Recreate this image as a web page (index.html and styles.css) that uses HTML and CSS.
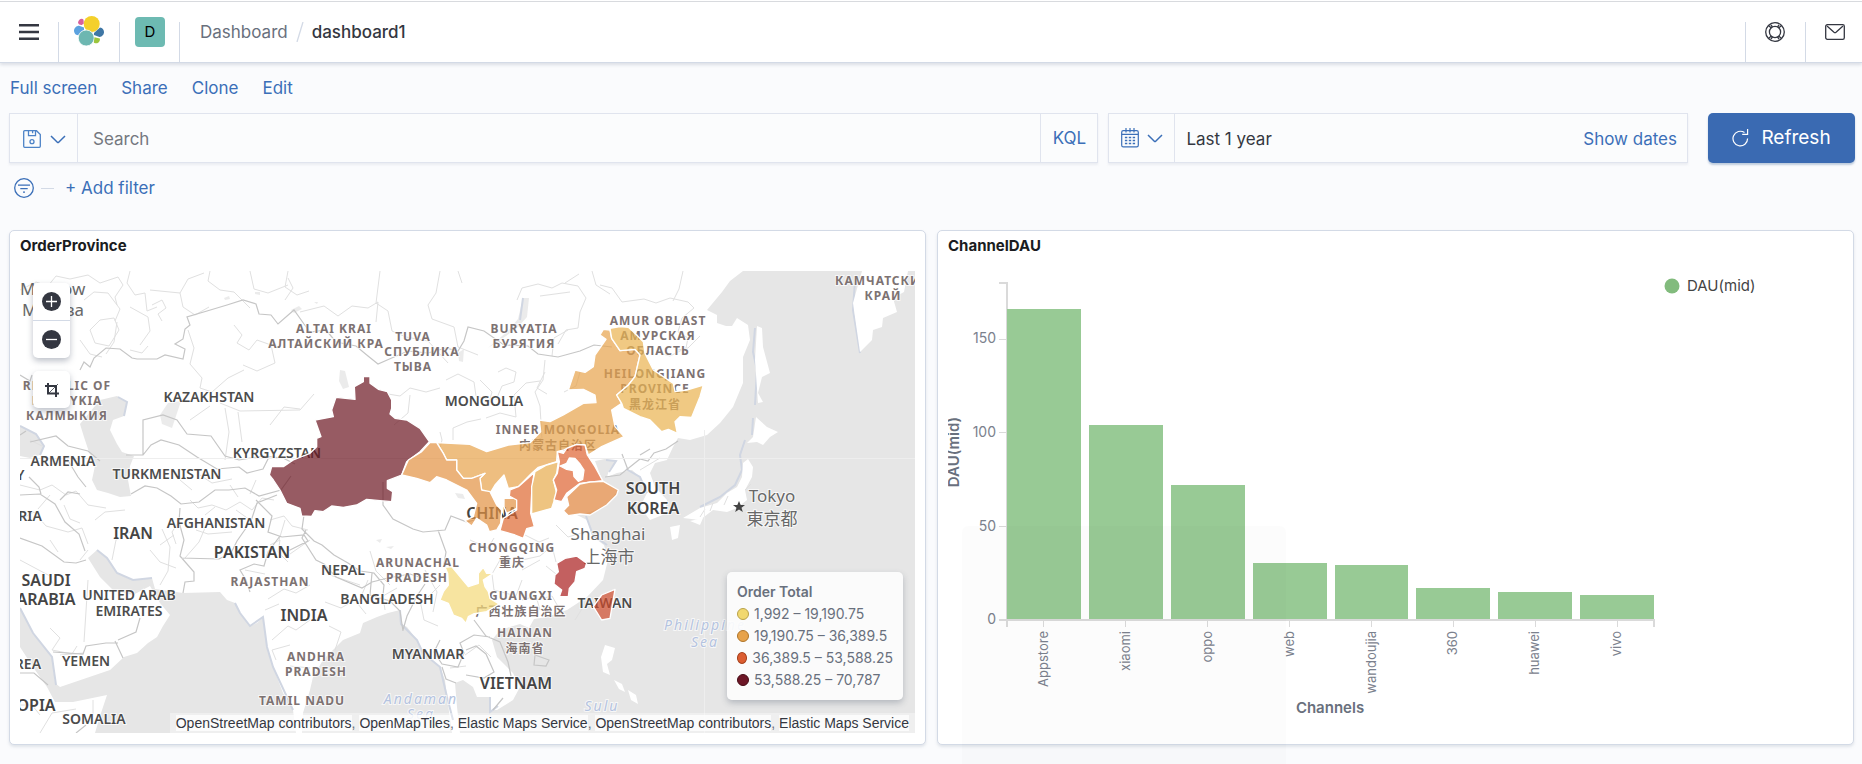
FILE: index.html
```html
<!DOCTYPE html>
<html lang="en">
<head>
<meta charset="utf-8">
<title>dashboard1</title>
<link rel="stylesheet" href="styles.css">
</head>
<body>
<header class="header">
  <button class="header-item menu" aria-label="Menu">
    <svg width="20" height="16" viewBox="0 0 20 16" fill="#343741"><path d="M0 0h20v2.4H0zM0 6.8h20v2.4H0zM0 13.6h20V16H0z"/></svg>
  </button>
  <a class="header-item logo" href="#" aria-label="Home">
    <svg width="30" height="30" viewBox="0 0 30 30">
      <circle cx="17.700" cy="8" r="8" fill="#f4d02b"/>
      <path d="M4 6.500c.5-3 4-5 5.500-2.700l.3 3.800-2 1.300C6 9 4.500 8.500 4 6.500z" fill="#d7609c"/>
      <path d="M5 9.700l5 1.800v2.800l-5.800 5C1 19 0 16.500 0 14.500c0-2.500 2.500-4.800 5-4.800z" fill="#5ca2df"/>
      <circle cx="12.200" cy="22" r="8" fill="#6db7b1" stroke="#fff" stroke-width=".8"/>
      <path d="M20 17l6-5.500c2.500.2 4 2.500 4 4.500 0 2.500-2 4.800-4.500 5L20 19z" fill="#3f77a5"/>
      <path d="M20.500 21.200l5.300 1.300c.6 2-.8 4.700-3.500 4.800-1.300 0-2.500-.3-2.500-.8z" fill="#9cc53c"/>
    </svg>
  </a>
  <button class="header-item space" aria-label="Default space"><span class="avatar">D</span></button>
  <nav class="crumbs" aria-label="Breadcrumb">
    <a href="#">Dashboard</a>
    <svg class="crumb-sep" width="8" height="20" viewBox="0 0 8 20" stroke="#d3dae6" stroke-width="1.300"><path d="M1 20L7 0"/></svg>
    <span class="current">dashboard1</span>
  </nav>
  <div class="header-right">
    <button class="header-item end" aria-label="Help">
      <svg width="20" height="20" viewBox="0 0 20 20" fill="none" stroke="#343741" stroke-width="1.300"><circle cx="10" cy="10" r="9.300"/><circle cx="10" cy="10" r="5.600"/><path d="M3.400 3.600l3 2.300M5.900 3l1.600 2M16.600 3.600l-3 2.300M14.100 3l-1.600 2M3.400 16.400l3-2.300M5.900 17l1.600-2M16.600 16.400l-3-2.300M14.100 17l-1.600-2"/></svg>
    </button>
    <button class="header-item end" aria-label="News">
      <svg width="20" height="16" viewBox="0 0 20 16" fill="none" stroke="#343741" stroke-width="1.300"><rect x=".7" y=".7" width="18.600" height="14.600" rx="1.600"/><path d="M2 2l7 6.200q1 .8 2 0L18 2"/></svg>
    </button>
  </div>
</header>

<nav class="topnav" aria-label="Dashboard actions">
  <button>Full screen</button><button>Share</button><button>Clone</button><button>Edit</button>
</nav>

<form class="query">
  <div class="box search">
    <button type="button" class="picker" aria-label="Saved queries">
      <svg width="18" height="18" viewBox="0 0 18 18" fill="none" stroke="#4d83c7" stroke-width="1.300"><path d="M1.700.7h11.800l3.800 3.800v11.800a1 1 0 0 1-1 1H1.700a1 1 0 0 1-1-1V1.700a1 1 0 0 1 1-1zM5.500.7v5h7v-5M9.600.7v2.500"/><circle cx="9" cy="11.700" r="2"/></svg>
      <svg width="16" height="9" viewBox="0 0 16 9" fill="none" stroke="#3b6fb8" stroke-width="1.500"><path d="M1 1l6.300 6.200q.7.600 1.400 0L15 1"/></svg>
    </button>
    <input type="text" placeholder="Search" aria-label="Search">
    <button type="button" class="kql">KQL</button>
  </div>
  <div class="box dates">
    <button type="button" class="picker" aria-label="Quick dates">
      <svg width="18" height="20" viewBox="0 0 18 20" fill="none" stroke="#3b6fb8" stroke-width="1.200"><rect x=".7" y="2.600" width="16.600" height="16.200" rx="1.600"/><path d="M.7 6.300h16.600M5 0v4.600M9 0v4.600M13 0v4.600"/><path stroke-dasharray="2.400 1.500" stroke-width="1.700" d="M3.900 9.500h10.400M3.900 12.500h10.400M3.900 15.500h10.400"/></svg>
      <svg width="16" height="9" viewBox="0 0 16 9" fill="none" stroke="#3b6fb8" stroke-width="1.500"><path d="M1 1l6.300 6.200q.7.600 1.400 0L15 1"/></svg>
    </button>
    <button type="button" class="range">Last 1 year</button>
    <button type="button" class="show">Show dates</button>
  </div>
  <button type="button" class="refresh">
    <svg width="17" height="18" viewBox="0 0 17 18" fill="none" stroke="#fff" stroke-width="1.200"><path d="M15.600 9.500A7.300 7.300 0 1 1 12.500 3.600M15.600 0v5.400h-5.400"/></svg>
    Refresh
  </button>
</form>

<div class="filters">
  <button aria-label="Filter options"><svg width="20" height="20" viewBox="0 0 20 20" fill="none" stroke="#3b6fb8" stroke-width="1.300"><circle cx="10" cy="10" r="9.300"/><path d="M4 7.200h12M6.300 10.700h7.400M9 14.200h2"/></svg></button>
  <span class="dash"></span>
  <button>+ Add filter</button>
</div>

<main class="grid">
  <section class="panel">
    <h2>OrderProvince</h2>
    <div class="map">
      <svg class="canvas" viewBox="20 271 895 462" role="img" aria-label="Map of orders by province">
        <rect class="land" x="20" y="271" width="895" height="462"/>
        <g class="sea">
          <path d="M743 271L730 281 722 292 707 310 717 315 717 323 726 326 732 326 737 318 748 325 750 340 743 357 743 383 733 407 720 423 707 435 690 440 678 438 673 447 667 460 655 463 650 473 655 487 667 500 665 514 650 520 640 507 647 493 640 477 632 470 617 473 607 477 609 470 616 461 605 459 595 461 602 480 618 490 607 505 590 512 577 515 587 520 593 537 604 545 608 560 603 580 587 597 567 610 547 617 534 619 529 628 520 624 500 630 492 640 497 657 513 673 520 687 513 700 497 710 490 710 490 697 477 697 473 687 463 680 455 683 457 707 460 733 452 733 447 697 445 680 440 667 430 660 423 653 417 640 407 627 400 623 400 610 388 613 377 617 363 623 360 633 343 640 323 660 313 677 310 690 303 713 302 733 296 733 293 710 283 693 273 667 267 647 263 617 257 623 250 626 240 613 235 603 227 600 220 592 183 593 155 589 152 578 133 580 117 573 107 558 97 550 88 558 100 577 113 590 133 595 150 586 160 603 170 615 163 626 157 637 148 643 137 653 124 657 110 670 60 687 55 683 52 657 40 642 33 633 23 613 20 608V647L33 667 47 687 55 702 73 702 107 695 100 716 95 733H915V271z"/>
          <path d="M100 400L117 396 127 402 124 416 113 420 110 430 117 444 122 452 134 456 130 466 128 480 131 496 120 497 108 493 97 490 92 480 95 466 89 452 84 437 80 424z"/>
          <path d="M20 426L36 434 44 446 40 455 30 458 20 456z"/>
          <path d="M523 298h6l-2 19-9 10-12 9-18 12 20-17 10-12zM160 415l8-12 13-2-3 9-6 18-10-4zM291 310l8-4 3 3-8 4zM340 370l5 1 4 16-6 2-4-8zM458 353l6-4-1 13-4-1zM224 298l5-2 1 3-5 1zM255 292l5 0 0 3-5-1zM455 493l8 1 2 5-7-1zM314 302l4 0-1 2zM376 540l6-1-2 4zM386 547l8-1-3 3z" opacity=".8"/>
        </g>
        <g class="coast">
          <path d="M20 608L33 633 52 657 56 685M97 550L107 558 117 573 133 580 152 578M235 603L240 613 250 626 263 617 267 647 273 667 293 710M400 610L401 624 417 640 423 653 440 667 447 697 453 720M490 697V712L498 706M20 426L36 434 44 446 40 455M118 397L127 402 124 416M755 328L753 352 757 370 755 405M753 418L752 435M745 440L740 455 742 470 735 485 720 497 700 507M523 298L520 320M855 280L853 310 860 353M606 460L616 461 609 472M626 469L640 477 647 493M586 516L593 535 607 545"/>
        </g>
        <g class="island">
          <path d="M862 271L853 303 860 352 872 340 873 330 882 327 883 318 897 312 893 298 904 292 908 271zM757 326L762 328 763 347 770 373 762 377 758 393 763 402 758 403 755 360zM756 417L767 427 778 432 770 437 763 445 757 442 747 443 753 437zM748 459L753 467 752 477 745 490 747 500 737 508 727 512 713 510 700 520 683 518 700 508 717 503 727 493 737 487 742 477 743 463zM670 527L680 525 678 538 672 540zM690 521L703 518 700 525zM605 645L615 648 612 660 607 664 610 675 603 672 601 657zM614 680l8 4 3 8-6-3zM628 690l8 5 2 9-7-4z"/>
        </g>
        <g class="line-light">
          <path d="M20 290l16-8 12 4 8-10 14 3 18-4 12 8 18-6 5 8-8 12 2 8M84 300l10-8 14 1 12 16-5 12M90 330l10-10 14-2 5 12-10 16-14-3zM130 271l-3 12 8 12 10-2 2 18 10-4M150 290l30 3 8-14 16-6M180 293l3 14 12 8 14-8M210 271l-2 10 12 9 14 2 16 16M250 271l4 18 14 4 20-8M288 271l-3 16 12 8 12-4M152 305l10-5 4 8-8 6 4 7M140 345l10-14-2-14-18-10M130 350l12 3 6-7M117 322l-3 20-8 12M80 340l10 14 12 3M188 330l6 18-4 16 12 14-2 10 12 4 16-14 16-8M234 325l8 10-5 8 12 7 8-10 14 5 4 18-18 8-14-6M285 300l8-12-5-10M300 312l24-6 14 10 14-10 16 2 10-6-2 20M380 271l-4 32 12 8 4 20 14 6 22 4 20 22M440 271l-4 22-8 12 4 14 22 8 4 20 20 8M462 283l-4-12M517 300l5-12 16-4 14 4 10-5 16 3 8 12-6 14-2 16-12 2-8 14M565 283l14-9M568 330l-14 8-2 18M540 296l30-4M592 271l4 14 14 9M600 285l12 3 10 14 22-3 12 4 14-5 18 4 6 6-12 10-4 14 10 6-2 10-16 8-14-4M683 271l-4 18-6 12M700 336l-12 12-10 2M545 360l-2 20-8 12 5 14 2 34M440 388l-14 4-16-4-10 8-12-2M410 395l-2 18-14 12M446 380l12-6 16 8 2 14 14 4M440 432l2 8-2 8M453 440v-12l14-6 14-3M480 380l12 12-4 14M486 418l14-5 16 4-2-22 12-12 14-2M498 372l8-4 10 4-2 10-12 4-6 14M545 372l-8 16 10 6M580 372l-4 14-12 6M20 485l20 5 12-5 14 10 10-4 12 14 18 3M20 520l14-8 12 14 22 6 14-4 6 16M50 540l8 12M64 505l6 14 10 4M30 440l12 6M80 560l8-10M20 560l30 16 4 10M95 520l10-8 20-2M112 560l4-20 14-8 20 4M150 550l10 12 16 6M160 585l8-14 2-24-8-18M88 580l-4 62M50 628l10 10-8 12 20 4 5-8M60 655l24-2M20 705h12l8 10M40 733l12-20 24-4M93 700v14M190 500l8 8 14-3 14 5 14-8 12 8 10-12 12 2M205 515l10-8M180 520l-8 12 4 12M196 530l12 4 24-2M185 558l14-16 6-14M236 510l14 10M270 545l10-5-2 12 10 10M245 570l20 4M310 540l-20 14M270 520l14-4 8 10 16 4M310 585l-14 8-12-4-16 10M265 610l14-6M272 640l16-14 8 4 14-10M276 660l-4-10 18-5M360 585l-30-10M368 580l-10 24 8 10M390 585l-14-14-6-20M325 602l16 6 14-8M385 610l-2-14 14-8M425 570l12 22-4 20M440 585l-12 12M470 540l18 8 6-10M500 560l-8 14 2 16 22 6 6-16M522 560l18-4 12-10 4 16M540 560l-18 10M525 535l14 7 10-4M556 525l12 12 14-4M556 574l-10-8M560 610l-8-14-16 4M540 610l-4-14-14 4M575 620l10-16M465 655l14-10 12 12M450 668l16-2M420 600l4 20 14 6M335 650l6-18-12-6M310 668l-20-2M220 403l20 8 60-1 14-16M225 408l4 24-4 28M238 412l4 30M190 420l20-14M270 425l14-18 16 2M160 545l14-10M50 495l-12 14M230 485l8 12M256 480l-6 14M285 520l-6 20M200 475l12 8 20-4M180 480l12 10M640 470l20-12M745 490l6-6M724 505l4-9M710 511l3-8M700 517l5-8"/>
        </g>
        <g class="line">
          <path d="M80 370l4-8 6 5 4-9 12-10 14 1 12 9 5 1 20 0 8-4 18 4 2-10-10-5 8-5 2-10 5-4-3-8 20-6 20-6 16-5 13 4 3 10 12 1 7 9 16-14 10 14 6 8 16-2 10 12 20 4 12 10 10 8 16-7 14-6 20 2 18-5 12 3 6-10 4-14 16 4 20 14 24 1 10 8 20 3 22-6 14-6 18 2M20 375l10 6 2-6M30 442l26-6 12 10 20 5 12 10M20 435l6-4M66 457l12 20 8 10M143 455v-35l20-5 14 5 10 14 24 2 14 20 14 4 24-4 20 2 12 6M126 455h17l8-10 10-5 18 5 18 12 20 12 22-2 8 6 16-4 6-12M20 495l20-1 15 10 10 18 14 12 6 17M20 538l22 8 22 16 12 1 10-3M41 494l-2-7-10-10M60 500l8-8 12 2M131 494l14-8 12 2 14 8 10 8 18-2 16-12 14 0 16-2 14 8 22-6 10-14M180 508l-1 14 5 18-4 16 14 16 0 9-9 1-2 11M181 558l38 1 12-6 6-12 14-20 6-18 20-8M256 500l16 16-4 16 14 5 22-2 4 6-12 6-8 4M250 592l-4-12-6-10 14-6 10 2 4-14 12-16M118 643h-12l-20 3-3 8-30-2M115 641l8 17M118 640l18-8 4-14M20 673h14l14 12M76 733l10-8M304 515l-2 14 12 12 8 4 12 10 14 8 12 8 14 2 10 12-1 10M383 482v23l10 14 20 10 10 3 22-2 6-14 16 6 14-4M306 530l-4 8 14 22 8 4 12 13 26 11 10-6 16-4 22-4 12 4M372 573l-2 22 20 6 10 10 3 20M403 630l4-14 10-20 8-12M438 530l8 22-2 12M440 640l-6 12 8 12 16 3 6-14-4-10 14-8 16 2M442 667l4 12 10 4M474 620l12 16 14 6 8 20 3 14M466 650l10-4 10 8 8 18-10 6-18-3M605 477l15-2 20-16 8 2 6-8 12-4 12-8M628 470l-6-16M640 455l10-6M493 710l10-12M535 655l14 5-3 6-12-1z"/>
        </g>
        <path class="tile-edge" d="M20 458.500H915M704.500 430V733"/>

        <g class="city">
          <text x="20" y="295">Moscow</text><text x="22" y="316">Москва</text>
          <text class="mid" x="772" y="502">Tokyo</text><text class="mid" x="772" y="525">東京都</text>
          <text class="mid" x="608" y="540">Shanghai</text><text class="mid" x="609" y="563">上海市</text>
        </g>
        <path fill="#444" d="M739 501l1.700 4h4.300l-3.500 2.700 1.300 4.300-3.800-2.600-3.800 2.600 1.300-4.300-3.500-2.700h4.300z"/>
        <g class="region">
          <text x="67" y="390">REPUBLIC OF</text><text x="67" y="405">KALMYKIA</text><text x="67" y="420">КАЛМЫКИЯ</text>
          <text x="334" y="333">ALTAI KRAI</text><text x="326" y="348">АЛТАЙСКИЙ КРА</text>
          <text x="413" y="341">TUVA</text><text x="422" y="356">СПУБЛИКА</text><text x="413" y="371">ТЫВА</text>
          <text x="524" y="333">BURYATIA</text><text x="524" y="348">БУРЯТИЯ</text>
          <text x="558" y="434">INNER MONGOLIA</text><text x="558" y="450">内蒙古自治区</text>
          <text x="658" y="325">AMUR OBLAST</text><text x="658" y="340">АМУРСКАЯ</text><text x="658" y="355">ОБЛАСТЬ</text>
          <text x="655" y="378">HEILONGJIANG</text><text x="655" y="393">PROVINCE</text><text x="655" y="409">黑龙江省</text>
          <text x="883" y="285">КАМЧАТСКИЙ</text><text x="883" y="300">КРАЙ</text>
          <text x="512" y="552">CHONGQING</text><text x="512" y="567">重庆</text>
          <text x="521" y="600">GUANGXI</text><text x="521" y="616">广西壮族自治区</text>
          <text x="525" y="637">HAINAN</text><text x="525" y="653">海南省</text>
          <text x="418" y="567">ARUNACHAL</text><text x="417" y="582">PRADESH</text>
          <text x="316" y="661">ANDHRA</text><text x="316" y="676">PRADESH</text>
          <text x="302" y="705">TAMIL NADU</text><text x="270" y="586">RAJASTHAN</text>
        </g>
        <g class="country">
          <text x="209" y="402">KAZAKHSTAN</text><text x="63" y="466">ARMENIA</text><text x="167" y="479">TURKMENISTAN</text>
          <text x="277" y="458">KYRGYZSTAN</text><text x="484" y="406">MONGOLIA</text><text x="605" y="608">TAIWAN</text>
          <text x="428" y="659">MYANMAR</text><text x="387" y="604">BANGLADESH</text><text x="343" y="575">NEPAL</text>
          <text x="216" y="528">AFGHANISTAN</text><text x="22" y="521">SYRIA</text><text x="129" y="600">UNITED ARAB</text>
          <text x="129" y="616">EMIRATES</text><text x="86" y="666">YEMEN</text><text x="13" y="669">ERITREA</text><text x="94" y="724">SOMALIA</text>
          <text x="-2" y="480">TURKEY</text>
        </g>
        <g class="country large">
          <text x="653" y="494">SOUTH</text><text x="653" y="514">KOREA</text><text x="492" y="519">CHINA</text>
          <text x="516" y="689">VIETNAM</text><text x="304" y="621">INDIA</text><text x="252" y="558">PAKISTAN</text>
          <text x="133" y="539">IRAN</text><text x="46" y="586">SAUDI</text><text x="46" y="605">ARABIA</text><text x="18" y="711">ETHIOPIA</text>
        </g>
        <g class="water">
          <text x="421" y="704">Andaman</text><text x="421" y="719">Sea</text>
          <text x="602" y="711">Sulu</text><text x="705" y="630">Philippine</text><text x="705" y="647">Sea</text>
        </g>

        <g class="provinces" transform="translate(300 260) scale(.33333)">
          <path fill="#6b1521" d="M190 350L210 350 210 370 235 388 262 395 275 420 275 445 270 462 285 475 320 480 360 505 388 545 360 575 320 605 305 645 262 662 262 685 278 695 275 725 240 722 200 718 170 735 130 742 95 738 70 755 45 752 35 769 5 768 0 745 -40 730 -60 690 -80 660 -92 645 -85 620 -50 620 -20 600 30 580 50 560 50 535 63 530 45 480 100 470 95 450 108 412 165 418 163 380 190 365z"/>
          <path fill="#e7a24a" d="M410 548L510 553 560 575 625 555 690 548 722 515 718 480 750 485 790 465 850 430 888 428 885 405 850 388 805 390 825 330 855 337 880 320 885 285 918 238 900 225 910 208 930 210 935 235 960 272 1005 268 1020 285 1005 350 985 375 950 405 965 430 935 450 945 500 972 530 905 560 865 585 855 555 830 553 790 570 772 575 770 605 715 622 695 640 655 680 625 685 612 645 585 675 570 700 545 690 540 655 555 640 515 655 490 655 470 630 470 600 440 600 430 580z"/>
          <path fill="#eab24e" d="M930 205L960 200 985 202 1000 215 1030 245 1035 280 1060 330 1120 370 1125 395 1160 390 1210 375 1200 410 1175 472 1140 470 1125 485 1132 520 1105 508 1085 515 1050 480 1020 470 970 445 965 430 950 405 985 375 1005 350 1020 285 1005 268 960 272 935 235z"/>
          <path fill="#e39142" d="M390 548L410 548 430 580 440 600 470 600 470 630 490 655 515 655 555 640 540 655 545 690 570 695 590 735 605 750 602 790 590 810 568 815 560 795 530 775 515 798 495 782 520 770 530 730 500 690 440 660 410 650 390 668 350 655 305 645 325 600 365 575zM612 715L650 715 650 745 620 760 612 740z"/>
          <path fill="#de6831" d="M702 638L695 700 692 760 703 800 680 806 670 835 645 825 600 812 610 775 650 750 650 720 628 708 630 690 655 680z"/>
          <path fill="#e7ab4c" d="M775 605L770 640 760 660 770 700 755 745 695 762 695 680 705 635 740 615z"/>
          <path fill="#de6330" fill-rule="evenodd" d="M772 575L790 580 800 565 830 553 855 555 862 585 885 620 908 662 840 670 800 700 785 725 762 720 770 690 760 660 772 640 778 605zM780 618L800 610 808 594 825 595 840 612 852 630 848 658 835 664 822 650 820 632 800 628z"/>
          <path fill="#e0833a" d="M800 710L840 672 870 666 910 664 955 690 950 705 920 735 870 765 840 762 805 767 790 752 806 736z"/>
          <path fill="#f3d877" d="M435 922L455 920 505 980 535 970 535 940 550 922 560 940 580 940 550 960 555 980 565 995 570 1015 597 1032 560 1055 520 1062 505 1070 498 1090 485 1075 460 1065 445 1030 420 1020 430 995 445 975 443 940z"/>
          <path fill="#aa1c1c" d="M795 895L830 888 860 910 855 925 830 935 825 965 808 985 805 1010 778 1010 785 990 762 972 765 945 775 935 770 910z"/>
          <path fill="#cf4a2b" d="M880 1040L905 1005 945 988 930 1075 905 1080z"/>
        </g>
      </svg>

      <div class="map-tools">
        <div class="tool-group">
          <button aria-label="Zoom in"><svg width="19" height="19" viewBox="0 0 19 19"><circle cx="9.500" cy="9.500" r="9.500" fill="#343741"/><path d="M4 9.500h11M9.500 4v11" stroke="#fff" stroke-width="1.300"/></svg></button>
          <button aria-label="Zoom out"><svg width="19" height="19" viewBox="0 0 19 19"><circle cx="9.500" cy="9.500" r="9.500" fill="#343741"/><path d="M4 9.500h11" stroke="#fff" stroke-width="1.300"/></svg></button>
        </div>
        <div class="tool-group">
          <button aria-label="Fit to data"><svg width="14" height="14" viewBox="0 0 14 14" fill="none" stroke="#343741" stroke-width="2"><path d="M3 0v10.500h11M0 3h11v11"/><path stroke-width=".8" d="M4 10l9-9"/></svg></button>
        </div>
      </div>

      <div class="legend">
        <h3>Order Total</h3>
        <ul>
          <li><i class="dot d1"></i>1,992 – 19,190.75</li>
          <li><i class="dot d2"></i>19,190.75 – 36,389.5</li>
          <li><i class="dot d3"></i>36,389.5 – 53,588.25</li>
          <li><i class="dot d4"></i>53,588.25 – 70,787</li>
        </ul>
      </div>

      <div class="credits"><a href="#">OpenStreetMap contributors</a>, <a href="#">OpenMapTiles</a>, <a href="#">Elastic Maps Service</a>, <a href="#">OpenStreetMap contributors</a>, <a href="#">Elastic Maps Service</a></div>
    </div>
  </section>

  <section class="panel">
    <h2>ChannelDAU</h2>
    <svg class="canvas" viewBox="948 271 895 462" role="img" aria-label="DAU by channel">
      <g class="bars">
        <path d="M1007 309h74v310h-74zM1089 425h74v194h-74zM1171 485h74v134h-74zM1253 563h74v56h-74zM1335 565h73v54h-73zM1416 588h74v31h-74zM1498 592h74v27h-74zM1580 595h74v24h-74z"/>
      </g>
      <g class="axis">
        <path stroke-width="2" d="M999 283h8v26M999 620h656"/>
        <path stroke-width="2" d="M1007 620v7M1654 620v7"/>
        <path d="M1006.500 309V619M999 339.500h7M999 432.500h7M999 526.500h7M1043.500 620v7M1125.500 620v7M1207.500 620v7M1289.500 620v7M1371.500 620v7M1453.500 620v7M1535.500 620v7M1617.500 620v7"/>
      </g>
      <g class="ticks">
        <text x="996" y="343">150</text><text x="996" y="437">100</text><text x="996" y="531">50</text><text x="996" y="624">0</text>
      </g>
      <g class="ticks names">
        <text transform="translate(1048 631) rotate(-90)">Appstore</text>
        <text transform="translate(1130 631) rotate(-90)">xiaomi</text>
        <text transform="translate(1212 631) rotate(-90)">oppo</text>
        <text transform="translate(1294 631) rotate(-90)">web</text>
        <text transform="translate(1376 631) rotate(-90)">wandoujia</text>
        <text transform="translate(1457 631) rotate(-90)">360</text>
        <text transform="translate(1539 631) rotate(-90)">huawei</text>
        <text transform="translate(1621 631) rotate(-90)">vivo</text>
      </g>
      <g class="axis-title">
        <text x="1330" y="713">Channels</text>
        <text transform="translate(959 452) rotate(-90)">DAU(mid)</text>
      </g>
      <circle cx="1672" cy="286" r="7.500" fill="#82bb7d"/>
      <text class="series" x="1687" y="291">DAU(mid)</text>
    </svg>
  </section>
</main>
<div class="ghost" aria-hidden="true"></div>
</body>
</html>
```
FILE: styles.css
```css
* { box-sizing: border-box; }
html, body { height: 100%; }
body {
  margin: 0;
  overflow: hidden;
  position: relative;
  background: #fafbfd;
  color: #343741;
  font: 17px/24px Inter, "Noto Sans CJK SC", sans-serif;
}
button, input { font: inherit; color: inherit; background: none; border: 0; padding: 0; margin: 0; }
button { cursor: pointer; white-space: nowrap; }
a { color: inherit; text-decoration: none; }
svg { display: block; flex: none; }
h2, h3, ul { margin: 0; padding: 0; list-style: none; }

.header {
  display: flex;
  align-items: stretch;
  height: 63px;
  background: #fff;
  border-top: 1px solid #fff;
  border-bottom: 1px solid #d3dae6;
  box-shadow: inset 0 1px #d8dade, 0 2px 3px rgba(152, 162, 179, .3);
}
.header-item {
  display: flex;
  justify-content: center;
  padding-top: 15px;
  background: linear-gradient(#d3dae6, #d3dae6) right 21px / 1px 100% no-repeat;
}
.menu { width: 59px; padding: 23px 1px 0 0; }
.logo { width: 61px; padding-right: 2px; }
.space { width: 60px; }
.avatar {
  width: 30px;
  height: 30px;
  margin-top: 1px;
  border-radius: 4px;
  background: #6dbab2;
  color: #000;
  font-size: 15px;
  line-height: 29px;
}
.crumbs { display: flex; align-items: flex-start; gap: 8px; padding: 19px 0 0 20px; color: #69707d; }
.crumb-sep { margin-top: 2px; }
.current { color: #343741; font-weight: 500; }
.header-right { display: flex; margin-left: auto; }
.end { width: 60px; padding-top: 21px; background-position: left 21px; }
.end:last-child { width: 57px; padding: 23px 0 0 3px; }

.topnav { display: flex; gap: 24px; padding: 13px 10px; color: #3b6fb8; }

.query { display: flex; padding: 0 7px 0 9px; }
.box {
  display: flex;
  align-items: stretch;
  height: 50px;
  border: 1px solid #e0e4ee;
  background: #fbfcfd;
  box-shadow: 0 2px 2px rgba(152, 162, 179, .15);
}
.search { flex: 1090; margin-right: 10px; }
.dates { flex: 579; margin-right: 20px; }
.picker { display: flex; align-items: center; gap: 9px; padding: 2px 12px 0 13px; border-right: 1px solid #e0e4ee; }
.search .picker { padding-right: 11px; }
.search input { flex: 1; min-width: 0; padding: 1px 15px 0; outline: 0; }
.search input::placeholder { color: #74787f; opacity: 1; }
.kql { width: 57px; border-left: 1px solid #e0e4ee; color: #3b6fb8; }
.dates .picker { gap: 8px; padding: 0 11px 0 12px; }
.range { padding: 1px 0 0 11px; }
.show { margin-left: auto; padding: 1px 10px 0 0; color: #3b6fb8; }
.refresh {
  display: flex;
  align-items: center;
  justify-content: center;
  gap: 12px;
  width: 147px;
  height: 50px;
  border-radius: 5px;
  background: #3a6ab2;
  color: #fff;
  font-size: 19px;
  box-shadow: 0 2px 2px rgba(54, 97, 150, .3);
}

.filters { display: flex; align-items: center; padding: 13px 14px 0; color: #3b6fb8; }
.dash { width: 13px; height: 1px; margin: 0 11px 0 7px; background: #d3dae6; }

.grid { display: flex; gap: 11px; padding: 30px 8px 0 9px; }
.panel {
  flex: 1;
  min-width: 0;
  padding: 6px 10px 11px;
  border: 1px solid #d3dae6;
  border-radius: 5px;
  background: #fff;
  box-shadow: 0 2px 3px rgba(152, 162, 179, .25);
}
.panel h2 { height: 34px; color: #1a1c21; font-size: 15px; line-height: 18px; font-weight: 700; }
.canvas { width: 100%; height: auto; }

.map { position: relative; overflow: hidden; }
.land, .island { fill: #fff; }
.sea { fill: #e6e6e6; }
.coast { fill: none; stroke: #d0d6e2; stroke-width: 2; }
.line { fill: none; stroke: #c6c6c6; stroke-width: 1.2; }
.line-light { fill: none; stroke: #e0e0e0; stroke-width: 1; }
.tile-edge { fill: none; stroke: #eee; }
.canvas text { font-family: "Noto Sans", "Noto Sans CJK SC", sans-serif; }
.region, .country, .city, .water { paint-order: stroke; stroke: rgba(255, 255, 255, .7); stroke-width: 2px; }
.city { font-size: 17px; fill: #686868; }
.mid, .region, .country, .water { text-anchor: middle; }
.region { font-size: 12px; font-weight: 700; letter-spacing: 1px; fill: #7d7272; }
.country { font-size: 14px; font-weight: 600; fill: #4c4c4c; }
.large { font-size: 16px; fill: #444; }
.water { font-size: 14px; font-style: italic; letter-spacing: 2px; fill: #b4c3e0; }
.provinces path { fill-opacity: .7; stroke: #fff; stroke-width: 4; stroke-linejoin: round; }

.map-tools { position: absolute; left: 13px; top: 12px; display: grid; gap: 13px; }
.tool-group { width: 37px; border-radius: 5px; background: #fff; box-shadow: 0 3px 6px rgba(65, 78, 101, .35); }
.tool-group button { display: grid; place-items: center; width: 37px; height: 37px; }
.tool-group button + button { height: 38px; border-top: 1px solid #d3dae6; }

.legend {
  position: absolute;
  right: 12px;
  bottom: 33px;
  width: 176px;
  padding: 9px 10px;
  border-radius: 5px;
  background: rgba(253, 253, 253, .9);
  box-shadow: 0 3px 6px rgba(65, 78, 101, .3);
  color: #69707d;
  font-size: 14px;
  line-height: 22px;
}
.legend h3 { font-size: 14px; font-weight: 600; }
.legend li { display: flex; align-items: center; gap: 5px; white-space: nowrap; }
.dot { width: 12px; height: 12px; border-radius: 50%; border: 1px solid; }
.d1 { background: #f1d86f; border-color: #b9a24a; }
.d2 { background: #e7a24a; border-color: #ae7429; }
.d3 { background: #dc5d31; border-color: #a5401b; }
.d4 { background: #6d1626; border-color: #450b15; }

.credits {
  position: absolute;
  right: 0;
  bottom: 0;
  padding: 0 6px;
  background: rgba(255, 255, 255, .35);
  color: #69707d;
  font: 14px/20px "Liberation Sans", Arial, sans-serif;
  white-space: nowrap;
}
.credits a { background: rgba(255, 255, 255, .75); color: #343741; }

.bars { fill: #98ca95; }
.axis { fill: none; stroke: #dadada; stroke-width: 1; }
.canvas .ticks text, .canvas .axis-title text, .canvas .series { font-family: Inter, sans-serif; }
.ticks { fill: #7b818d; font-size: 14px; text-anchor: end; }
.names { font-size: 13px; }
.axis-title { fill: #69707d; font-size: 15px; font-weight: 600; text-anchor: middle; }
.series { fill: #444; font-size: 15px; }

.ghost {
  position: absolute;
  left: 962px;
  top: 526px;
  width: 324px;
  bottom: 0;
  border-radius: 6px 6px 0 0;
  background: rgba(0, 0, 0, .01);
  pointer-events: none;
}
```
